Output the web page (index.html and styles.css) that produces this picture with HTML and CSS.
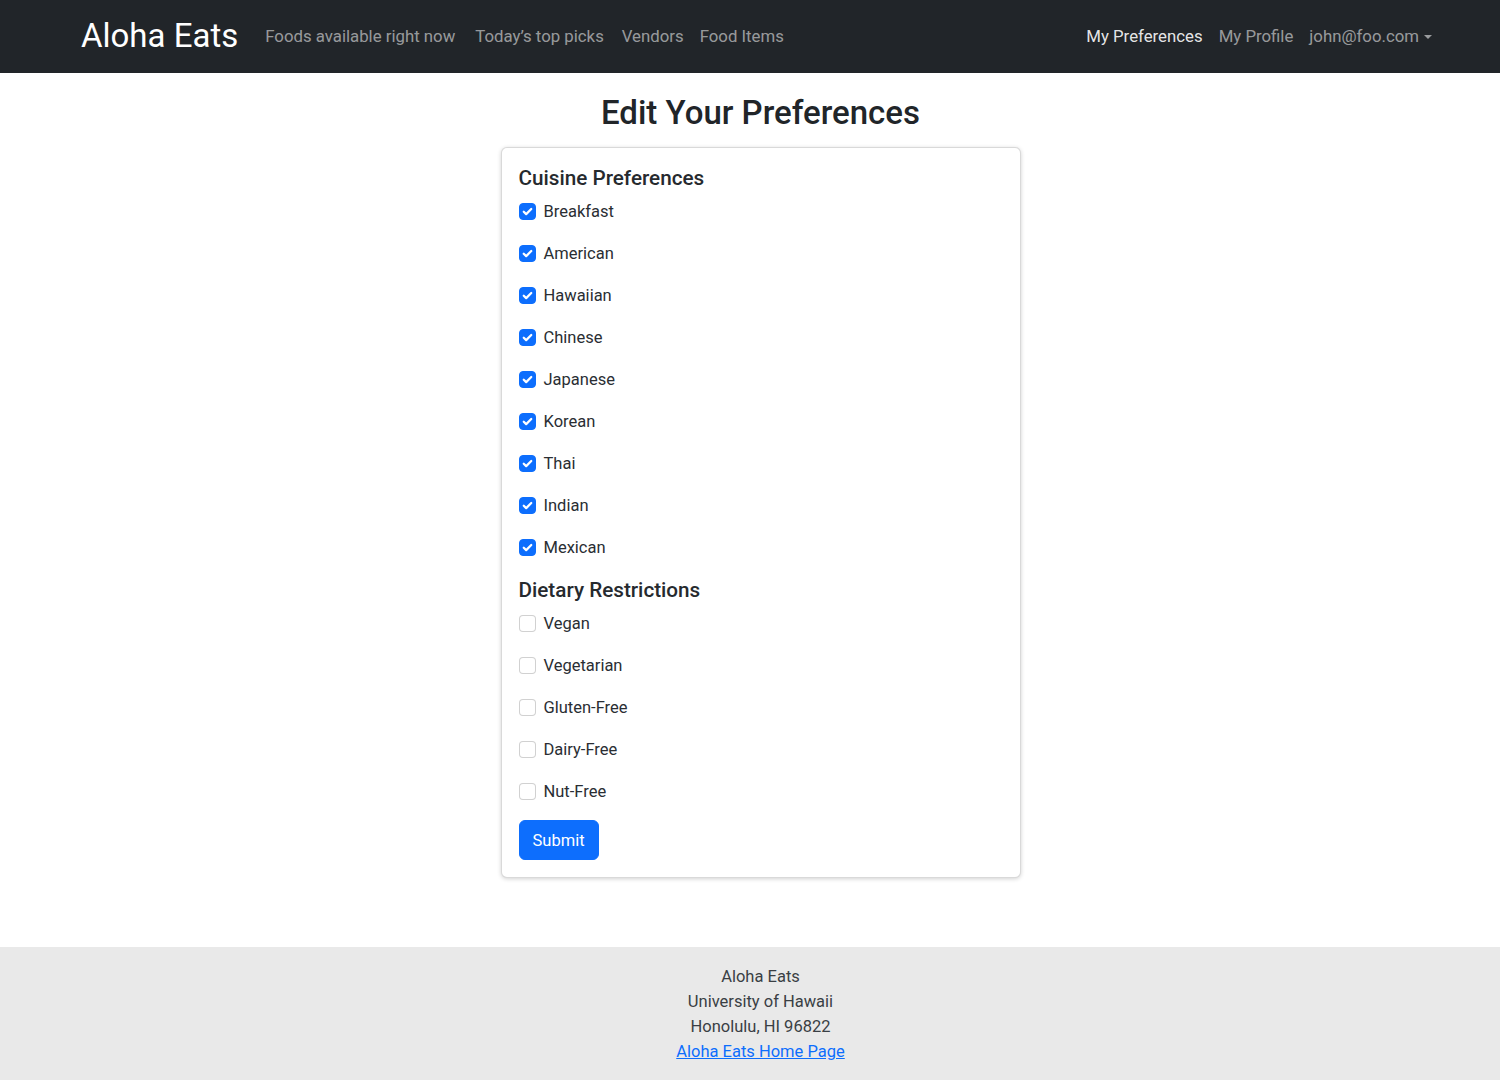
FILE: index.html
```html
<!DOCTYPE html>
<html lang="en">
<head>
<meta charset="utf-8">
<title>Aloha Eats - Edit Your Preferences</title>
<link rel="stylesheet" href="styles.css">
</head>
<body>
<div class="page">
  <nav class="navbar">
    <div class="nav-inner">
      <a class="brand" href="#">Aloha Eats</a>
      <ul class="nav-links">
        <li><a class="nav-link nl-1" href="#">Foods available right now</a></li>
        <li><a class="nav-link nl-2" href="#">Today’s top picks</a></li>
        <li><a class="nav-link" href="#">Vendors</a></li>
        <li><a class="nav-link" href="#">Food Items</a></li>
      </ul>
      <ul class="nav-links nav-right">
        <li><a class="nav-link active" href="#">My Preferences</a></li>
        <li><a class="nav-link" href="#">My Profile</a></li>
        <li><a class="nav-link dropdown" href="#">john@foo.com<span class="caret"></span></a></li>
      </ul>
    </div>
  </nav>

  <main class="main">
    <h2 class="page-title">Edit Your Preferences</h2>
    <div class="card">
      <form class="card-body">
        <h5 class="section-title">Cuisine Preferences</h5>
        <div class="check-list">
          <label class="check"><span class="box checked"><svg viewBox="0 0 16 16"><path d="M4 8.2l2.6 2.6L12 5.4"/></svg></span>Breakfast</label>
          <label class="check"><span class="box checked"><svg viewBox="0 0 16 16"><path d="M4 8.2l2.6 2.6L12 5.4"/></svg></span>American</label>
          <label class="check"><span class="box checked"><svg viewBox="0 0 16 16"><path d="M4 8.2l2.6 2.6L12 5.4"/></svg></span>Hawaiian</label>
          <label class="check"><span class="box checked"><svg viewBox="0 0 16 16"><path d="M4 8.2l2.6 2.6L12 5.4"/></svg></span>Chinese</label>
          <label class="check"><span class="box checked"><svg viewBox="0 0 16 16"><path d="M4 8.2l2.6 2.6L12 5.4"/></svg></span>Japanese</label>
          <label class="check"><span class="box checked"><svg viewBox="0 0 16 16"><path d="M4 8.2l2.6 2.6L12 5.4"/></svg></span>Korean</label>
          <label class="check"><span class="box checked"><svg viewBox="0 0 16 16"><path d="M4 8.2l2.6 2.6L12 5.4"/></svg></span>Thai</label>
          <label class="check"><span class="box checked"><svg viewBox="0 0 16 16"><path d="M4 8.2l2.6 2.6L12 5.4"/></svg></span>Indian</label>
          <label class="check"><span class="box checked"><svg viewBox="0 0 16 16"><path d="M4 8.2l2.6 2.6L12 5.4"/></svg></span>Mexican</label>
        </div>
        <h5 class="section-title">Dietary Restrictions</h5>
        <div class="check-list">
          <label class="check"><span class="box"></span>Vegan</label>
          <label class="check"><span class="box"></span>Vegetarian</label>
          <label class="check"><span class="box"></span>Gluten-Free</label>
          <label class="check"><span class="box"></span>Dairy-Free</label>
          <label class="check"><span class="box"></span>Nut-Free</label>
        </div>
        <button type="button" class="btn-primary">Submit</button>
      </form>
    </div>
  </main>

  <footer class="footer">
    <div>Aloha Eats</div>
    <div>University of Hawaii</div>
    <div>Honolulu, HI 96822</div>
    <div><a href="#" class="footer-link">Aloha Eats Home Page</a></div>
  </footer>
</div>
</body>
</html>
```

FILE: styles.css
```css
* { box-sizing: border-box; }

html, body {
  margin: 0;
  padding: 0;
  background: #ffffff;
}

body {
  font-family: Roboto, "Liberation Sans", sans-serif;
  font-size: 16.5px;
  line-height: 25px;
  color: #212529;
}

.page {
  min-height: 1080px;
  display: flex;
  flex-direction: column;
}

/* Navbar */
.navbar {
  background: #212529;
  height: 73px;
  padding-left: 21px;
}

.nav-inner {
  width: 1359px;
  height: 100%;
  margin: 0 auto;
  display: flex;
  align-items: center;
}

.brand {
  font-size: 33px;
  line-height: 40px;
  color: #ffffff;
  text-decoration: none;
  margin-right: 17px;
  margin-top: -2px;
}

.nav-links {
  list-style: none;
  margin: 0;
  padding: 0;
  display: flex;
  align-items: center;
}

.nav-right {
  margin-left: auto;
}

.nav-link {
  display: block;
  padding: 0 8px;
  color: rgba(255, 255, 255, 0.55);
  text-decoration: none;
  font-size: 16.8px;
  line-height: 25px;
}

.nl-1, .nl-2 { padding-right: 10px; padding-left: 10px; }

.nav-link.active {
  color: rgba(255, 255, 255, 0.9);
}

.caret {
  display: inline-block;
  margin-left: 5px;
  vertical-align: 3px;
  border-top: 4px solid rgba(255, 255, 255, 0.55);
  border-left: 4px solid transparent;
  border-right: 4px solid transparent;
}

/* Main */
.main {
  padding-left: 21px;
  padding-top: 20px;
  display: flex;
  flex-direction: column;
  align-items: center;
  flex: 1;
}

.page-title {
  margin: 0 0 14px;
  font-size: 33px;
  line-height: 40px;
  font-weight: 500;
  color: #212529;
}

.card {
  width: 520px;
  border: 1px solid rgba(0, 0, 0, 0.15);
  border-radius: 6px;
  background: #ffffff;
  box-shadow: 0 1px 4px rgba(0, 0, 0, 0.18);
}

.card-body {
  padding: 18px 17px 17px 17px;
  margin: 0;
}

.section-title {
  margin: 0 0 8px;
  font-size: 20.7px;
  line-height: 25px;
  font-weight: 500;
  color: #262a2e;
}

.check-list {
  display: flex;
  flex-direction: column;
  gap: 18px;
  margin-bottom: 19px;
}

.check {
  display: flex;
  align-items: center;
  height: 24px;
  font-size: 16.5px;
  color: #2a2e33;
}

.box {
  width: 17px;
  height: 17px;
  border: 1px solid rgba(0, 0, 0, 0.18);
  border-radius: 4px;
  background: #ffffff;
  margin-right: 8px;
  display: flex;
  align-items: center;
  justify-content: center;
  flex-shrink: 0;
}

.box.checked {
  background: #0d6efd;
  border-color: #0d6efd;
}

.box svg {
  width: 15px;
  height: 15px;
  fill: none;
  stroke: #ffffff;
  stroke-width: 2.4;
  stroke-linecap: round;
  stroke-linejoin: round;
}

.btn-primary {
  display: block;
  height: 40px;
  margin-top: -2px;
  padding: 0 13px;
  border: 1px solid #0d6efd;
  border-radius: 6px;
  background: #0d6efd;
  color: #ffffff;
  font-family: inherit;
  font-size: 16.5px;
  line-height: 25px;
  cursor: pointer;
}

/* Footer */
.footer {
  margin-top: 69px;
  background: #e9e9e9;
  padding: 17px 0 17px 21px;
  text-align: center;
  color: #3a3f44;
  font-size: 16.5px;
  line-height: 25px;
  height: 134px;
}

.footer-link {
  color: #0d6efd;
  text-decoration: underline;
}
```
